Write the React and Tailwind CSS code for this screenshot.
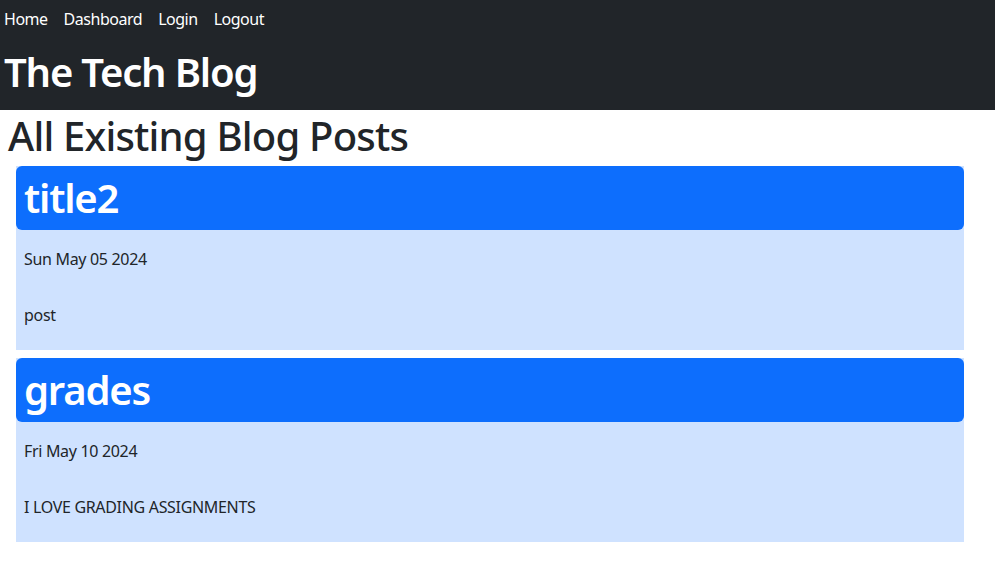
const posts = [
  { title: 'title2', date: 'Sun May 05 2024', body: 'post' },
  { title: 'grades', date: 'Fri May 10 2024', body: 'I LOVE GRADING ASSIGNMENTS' },
];

function PostCard({ post }) {
  return (
    <div className="bg-[#cfe2ff]">
      <div className="rounded-md bg-[#0d6efd] px-2 py-2">
        <h2 className="text-[40px] font-semibold leading-[48px] tracking-[-0.03em] text-white">{post.title}</h2>
      </div>
      <div className="px-2 pt-[17px] pb-[23px] text-base leading-6 tracking-[-0.02em] text-[#212529]">
        <p>{post.date}</p>
        <p className="mt-8">{post.body}</p>
      </div>
    </div>
  );
}

export default function App() {
  return (
    <div className="min-h-screen bg-white font-['Noto_Sans','Open_Sans',sans-serif] text-[#212529]">
      <header className="h-[110px] bg-[#212529] px-1 text-white">
        <nav className="flex gap-4 pt-[7px] text-base leading-6 tracking-[-0.03em]">
          <a href="#">Home</a>
          <a href="#">Dashboard</a>
          <a href="#">Login</a>
          <a href="#">Logout</a>
        </nav>
        <h1 className="mt-[17px] text-[40px] font-semibold leading-[48px] tracking-[-0.03em]">The Tech Blog</h1>
      </header>
      <main className="px-2">
        <h1 className="mb-1 text-[40px] font-medium leading-[52px] tracking-[-0.02em]">All Existing Blog Posts</h1>
        <div className="flex flex-col gap-2 pl-2 pr-[23px]">
          {posts.map((post) => (
            <PostCard key={post.title} post={post} />
          ))}
        </div>
      </main>
    </div>
  );
}
